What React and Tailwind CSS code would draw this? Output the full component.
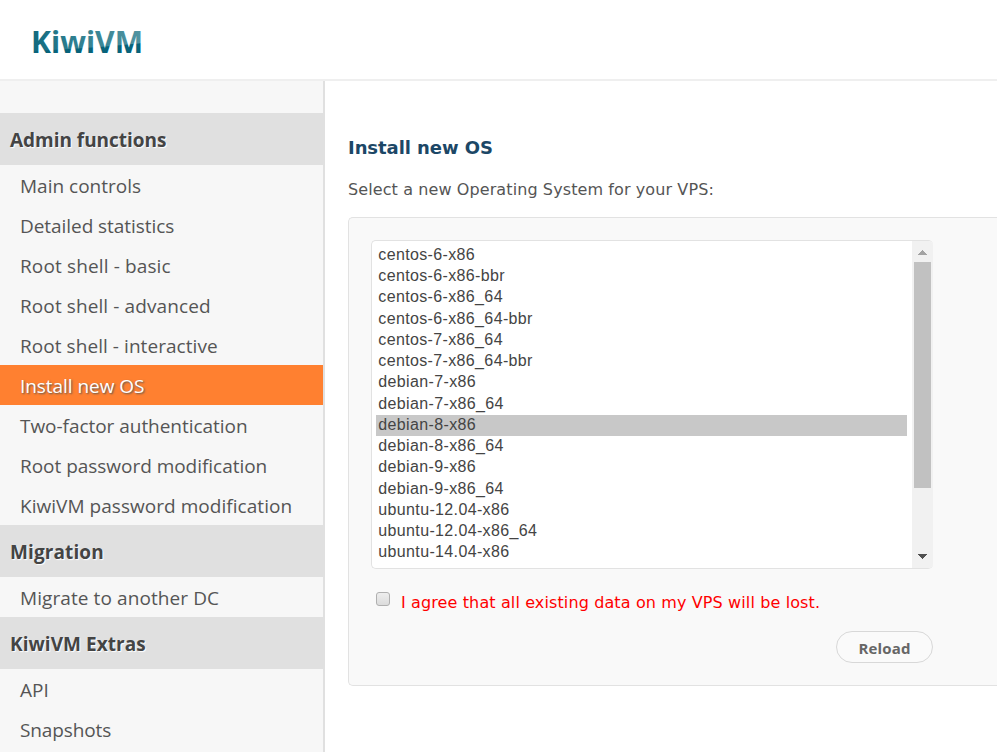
import React from 'react';

const sections = [
  {
    title: 'Admin functions',
    titleClass: 'tracking-[-0.03px]',
    items: [
      ['Main controls', 'tracking-[0px]'],
      ['Detailed statistics', 'tracking-[-0.06px]'],
      ['Root shell - basic', 'tracking-[0.13px]'],
      ['Root shell - advanced', 'tracking-[0.1px]'],
      ['Root shell - interactive', 'tracking-[0.06px]'],
      ['Install new OS', 'tracking-[-0.05px]', true],
      ['Two-factor authentication', 'tracking-[-0.04px]'],
      ['Root password modification', 'tracking-[-0.03px]'],
      ['KiwiVM password modification', 'tracking-[0.04px]'],
    ],
  },
  {
    title: 'Migration',
    titleClass: 'tracking-[0.1px]',
    items: [['Migrate to another DC', 'tracking-[0.09px]']],
  },
  {
    title: 'KiwiVM Extras',
    titleClass: 'tracking-[0.05px]',
    items: [
      ['API', 'tracking-[0px]'],
      ['Snapshots', 'tracking-[-0.12px]'],
    ],
  },
];

const systems = [
  'centos-6-x86',
  'centos-6-x86-bbr',
  'centos-6-x86_64',
  'centos-6-x86_64-bbr',
  'centos-7-x86_64',
  'centos-7-x86_64-bbr',
  'debian-7-x86',
  'debian-7-x86_64',
  'debian-8-x86',
  'debian-8-x86_64',
  'debian-9-x86',
  'debian-9-x86_64',
  'ubuntu-12.04-x86',
  'ubuntu-12.04-x86_64',
  'ubuntu-14.04-x86',
];

function Logo() {
  return (
    <svg className="h-[79px] w-[120px]" viewBox="0 0 120 79">
      <defs>
        <linearGradient id="tone" x1="0" y1="0" x2="1" y2="0">
          <stop offset="0" stopColor="#11697e" />
          <stop offset="0.3" stopColor="#2b7d8e" />
          <stop offset="1" stopColor="#5696a3" />
        </linearGradient>
        <pattern id="logoFill" patternUnits="userSpaceOnUse" width="120" height="79">
          <rect width="120" height="79" fill="url(#tone)" />
          <path d="M0 51Q60 48 90 45T120 43V79H0z" fill="#08637a" />
        </pattern>
      </defs>
      <text
        x="-1"
        y="52.5"
        textLength="112"
        lengthAdjust="spacingAndGlyphs"
        fill="url(#logoFill)"
        className="font-['Open_Sans',sans-serif] text-[31px] font-bold"
      >
        KiwiVM
      </text>
    </svg>
  );
}

function Sidebar() {
  return (
    <nav className="w-[325px] shrink-0 overflow-hidden border-r-2 border-[#e0e0e0] bg-[#f7f7f7] pt-8 font-['Open_Sans','Noto_Sans',sans-serif]">
      {sections.map((section) => (
        <div key={section.title}>
          <h2 className="flex h-[52px] items-center bg-[#e0e0e0] pt-[3px] pl-2.5 text-[19px] font-bold whitespace-nowrap text-[#444] [text-shadow:1px_1px_1px_#fff]">
            <span className={section.titleClass}>{section.title}</span>
          </h2>
          <ul>
            {section.items.map(([label, spacing, active]) => (
              <li
                key={label}
                className={
                  active
                    ? 'flex h-10 items-center bg-[#ff8030] pt-0.5 pl-5 text-[19px] whitespace-nowrap text-white [text-shadow:1px_1px_2px_#555]'
                    : 'flex h-10 items-center pt-0.5 pl-5 text-[19px] whitespace-nowrap text-[#555]'
                }
              >
                <span className={spacing}>{label}</span>
              </li>
            ))}
          </ul>
        </div>
      ))}
    </nav>
  );
}

function OsList() {
  return (
    <div className="flex h-[329px] w-[562px] overflow-hidden rounded-[5px] border border-r-0 border-[#e2e2e2] bg-white">
      <ul className="flex-1 pt-1 pr-[5px] pl-1 font-['Liberation_Sans',Arial,sans-serif] text-base tracking-[0.36px] text-[#444]">
        {systems.map((name) => (
          <li
            key={name}
            className={
              name === 'debian-8-x86'
                ? 'h-[21.24px] bg-[#c8c8c8] pl-[2.3px] leading-[20px]'
                : 'h-[21.24px] pl-[2.3px] leading-[20px]'
            }
          >
            {name}
          </li>
        ))}
      </ul>
      <div className="flex w-[21px] flex-col items-center bg-[#f1f1f1]">
        <svg className="mt-[9px] h-[5px] w-[9px]" viewBox="0 0 9 5" shapeRendering="crispEdges">
          <path d="M4 0h1v1h1v1h1v1h1v1h1v1H0V4h1V3h1V2h1V1h1z" fill="#a3a3a3" />
        </svg>
        <div className="mt-[7px] h-[226px] w-[17px] bg-[#c1c1c1]" />
        <svg className="mt-[66px] h-[5px] w-[9px]" viewBox="0 0 9 5" shapeRendering="crispEdges">
          <path d="M0 0h9v1H8v1H7v1H6v1H5v1H4V4H3V3H2V2H1V1H0z" fill="#505050" />
        </svg>
      </div>
    </div>
  );
}

export default function App() {
  return (
    <div className="flex h-[752px] w-[997px] flex-col overflow-hidden bg-white">
      <header className="h-[81px] shrink-0 border-b-2 border-[#efefef] pl-8">
        <Logo />
      </header>
      <div className="flex min-h-0 flex-1">
        <Sidebar />
        <main className="min-w-0 flex-1 pl-[23px] font-['DejaVu_Sans',Verdana,sans-serif]">
          <h1 className="mt-[55px] h-6 text-[18px] leading-6 font-bold tracking-[-0.07px] whitespace-nowrap text-[#1c4766]">
            Install new OS
          </h1>
          <p className="mt-[18px] h-6 text-base leading-6 tracking-[0.1px] whitespace-nowrap text-[#555]">
            Select a new Operating System for your VPS:
          </p>
          <section className="mt-[15px] h-[469px] rounded-l-[5px] border border-r-0 border-[#e2e2e2] bg-[#f9f9f9] pt-[22px] pl-[22px]">
            <OsList />
            <label className="mt-[22px] flex h-6 items-start pl-[5px] text-base leading-6 tracking-[0.12px] whitespace-nowrap text-[#f00]">
              <span className="mt-px mr-[11px] h-3.5 w-3.5 shrink-0 rounded-[3px] border border-[#b0b0b0] bg-gradient-to-b from-[#eee] to-[#dcdcdc]" />
              I agree that all existing data on my VPS will be lost.
            </label>
            <div className="mt-[16px] flex w-[562px] justify-end">
              <button className="h-8 w-[97px] rounded-full border border-[#d8d8d8] bg-[#fafafa] pt-0.5 font-['Open_Sans',sans-serif] text-[15px] leading-7 font-bold tracking-[0.15px] text-[#666]">
                Reload
              </button>
            </div>
          </section>
        </main>
      </div>
    </div>
  );
}
